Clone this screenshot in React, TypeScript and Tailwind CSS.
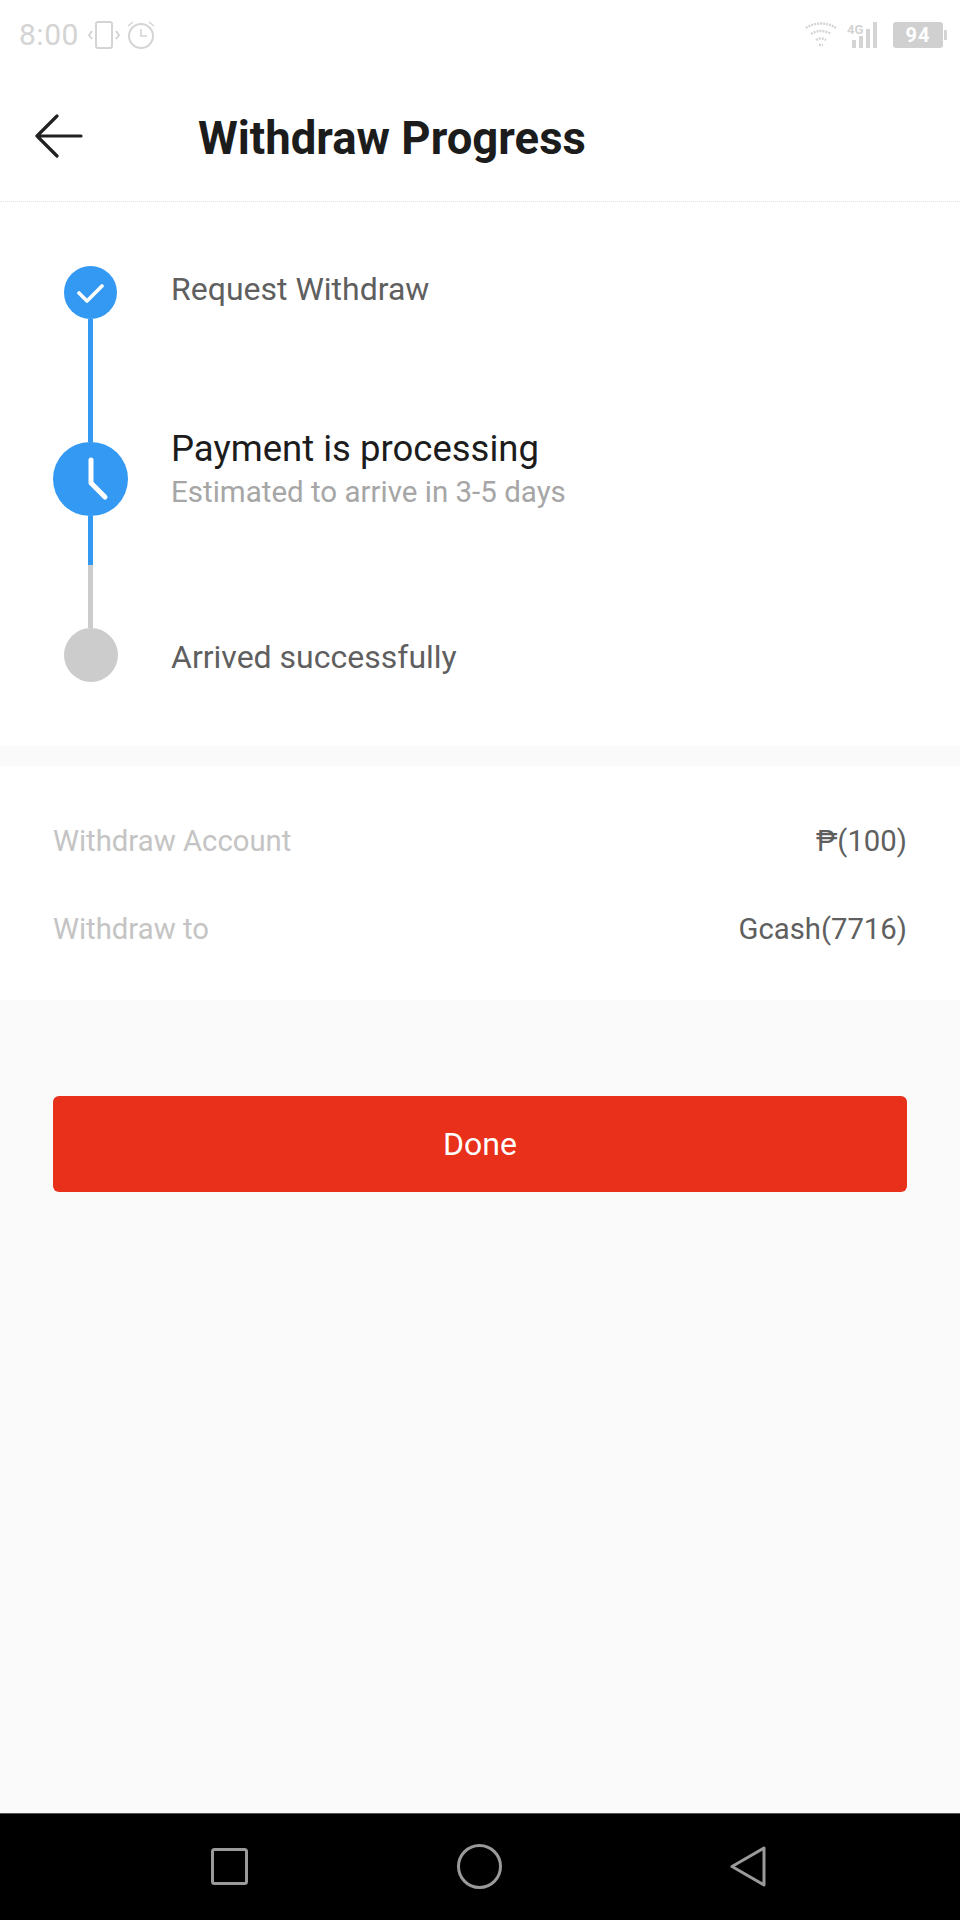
const font = { fontFamily: "Roboto, 'Liberation Sans', sans-serif" };

function StatusBar() {
  return (
    <div className="h-[68px] flex items-center justify-between pl-[19px] pr-[13px] pt-[2px] bg-white text-[#d4d4d4]">
      <div className="flex items-center gap-[9px]">
        <span className="text-[30px] leading-none tracking-[0.5px]">8:00</span>
        <svg width="32" height="28" viewBox="0 0 32 28" fill="none" stroke="currentColor" strokeWidth="2">
          <rect x="8" y="1" width="16" height="26" rx="2" />
          <path d="M4 10l-3 4 3 4M28 10l3 4-3 4" />
        </svg>
        <svg width="30" height="30" viewBox="0 0 30 30" fill="none" stroke="currentColor" strokeWidth="2" className="-ml-[3px]">
          <circle cx="15" cy="16" r="12" />
          <path d="M15 9v7h6M2 6l5-4M28 6l-5-4" strokeWidth="1.6" />
        </svg>
      </div>
      <div className="flex items-center">
        <svg width="32" height="26" viewBox="0 0 32 26" fill="none" stroke="currentColor" strokeWidth="2.4" strokeDasharray="2 1">
          <path d="M1 6c8-6 22-6 30 0M6 12c6-4 14-4 20 0M11 18c3-2 7-2 10 0" />
          <path d="M14 23h4" />
        </svg>
        <div className="relative w-[30px] h-[26px] ml-[10px]">
          <span className="absolute left-0 top-[1px] text-[13px] font-bold leading-none">4G</span>
          <svg width="30" height="26" viewBox="0 0 30 26" fill="currentColor">
            <rect x="5" y="18" width="4" height="8" />
            <rect x="12" y="14" width="4" height="12" />
            <rect x="19" y="7" width="4" height="19" />
            <rect x="26" y="0" width="4" height="26" />
          </svg>
        </div>
        <div className="flex items-center ml-[16px]">
          <div className="w-[50px] h-[26px] rounded-[3px] bg-[#d0d0d0] flex items-center justify-center text-white text-[20px] font-bold leading-none tracking-[1px]">
            94
          </div>
          <div className="w-[3px] h-[10px] ml-[1px] bg-[#d4d4d4] rounded-r-[1px]" />
        </div>
      </div>
    </div>
  );
}

function Header() {
  return (
    <div className="h-[134px] flex items-center bg-white border-b border-dotted border-[#e4e4e4] pt-[3px]">
      <svg width="48" height="44" viewBox="0 0 48 44" fill="none" stroke="#222222" strokeWidth="3.2" strokeLinecap="round" strokeLinejoin="round" className="ml-[35px] shrink-0">
        <path d="M46 22H2M22 2L2 22l20 20" />
      </svg>
      <h1 className="ml-[115px] mt-[6px] text-[45.5px] leading-none font-bold text-[#1c1c1c]">Withdraw Progress</h1>
    </div>
  );
}

function Timeline() {
  return (
    <div className="flex bg-white h-[544px]">
      <div className="w-[75px] ml-[53px] pt-[64px] flex flex-col items-center shrink-0">
        <div className="w-[53px] h-[53px] rounded-full bg-[#3399f3] flex items-center justify-center">
          <svg width="27" height="20" viewBox="0 0 27 20" fill="none" stroke="white" strokeWidth="3.6" strokeLinecap="round" strokeLinejoin="round">
            <path d="M2 10l8 8L25 3" />
          </svg>
        </div>
        <div className="w-[5px] h-[123px] bg-[#3399f3]" />
        <div className="w-[75px] h-[74px] rounded-full bg-[#3399f3] flex items-center justify-center">
          <svg width="75" height="74" viewBox="0 0 75 74" fill="none" stroke="white" strokeWidth="5" strokeLinecap="round" strokeLinejoin="round">
            <path d="M38 18v23l14 14" />
          </svg>
        </div>
        <div className="w-[5px] h-[49px] bg-[#3399f3]" />
        <div className="w-[5px] h-[63px] bg-[#cccccc]" />
        <div className="w-[54px] h-[54px] rounded-full bg-[#cccccc]" />
      </div>
      <div className="ml-[43px] pt-[69px] flex flex-col">
        <div className="text-[32px] leading-[36px] text-[#5f5f5f]">Request Withdraw</div>
        <div className="mt-[121px] text-[36.5px] leading-[42px] text-[#1c1c1c]">Payment is processing</div>
        <div className="mt-[4px] text-[29.5px] leading-[36px] text-[#a6a6a6]">Estimated to arrive in 3-5 days</div>
        <div className="mt-[129px] text-[32px] leading-[36px] text-[#5f5f5f]">Arrived successfully</div>
      </div>
    </div>
  );
}

function InfoRow({ label, value }: { label: string; value: string }) {
  return (
    <div className="flex items-center justify-between h-[88px]">
      <span className="text-[29.3px] text-[#c4c4c4]">{label}</span>
      <span className="text-[29.3px] text-[#5f5f5f]">{value}</span>
    </div>
  );
}

function NavBar() {
  return (
    <div className="h-[107px] bg-black border-t border-[#555555] flex items-center pl-[211px] pb-[2px]">
      <svg width="37" height="37" viewBox="0 0 37 37" fill="none" stroke="#9a9a9a" strokeWidth="3">
        <rect x="1.5" y="1.5" width="34" height="34" rx="2" />
      </svg>
      <svg width="45" height="45" viewBox="0 0 45 45" fill="none" stroke="#9a9a9a" strokeWidth="3" className="ml-[209px]">
        <circle cx="22.5" cy="22.5" r="21" />
      </svg>
      <svg width="36" height="41" viewBox="0 0 36 41" fill="none" stroke="#9a9a9a" strokeWidth="3" strokeLinejoin="round" className="ml-[228px]">
        <path d="M34 2v37L2 20.5z" />
      </svg>
    </div>
  );
}

export default function App() {
  return (
    <div style={font} className="w-[960px] h-[1920px] flex flex-col bg-[#fafafa] overflow-hidden">
      <StatusBar />
      <Header />
      <Timeline />
      <div className="mt-[20px] bg-white px-[53px] h-[234px] pt-[32px]">
        <InfoRow label="Withdraw Account" value="₱(100)" />
        <InfoRow label="Withdraw to" value="Gcash(7716)" />
      </div>
      <div className="flex-1 px-[53px] pt-[96px]">
        <button className="w-full h-[96px] rounded-[6px] bg-[#e8301a] text-white text-[32px]">Done</button>
      </div>
      <NavBar />
    </div>
  );
}
